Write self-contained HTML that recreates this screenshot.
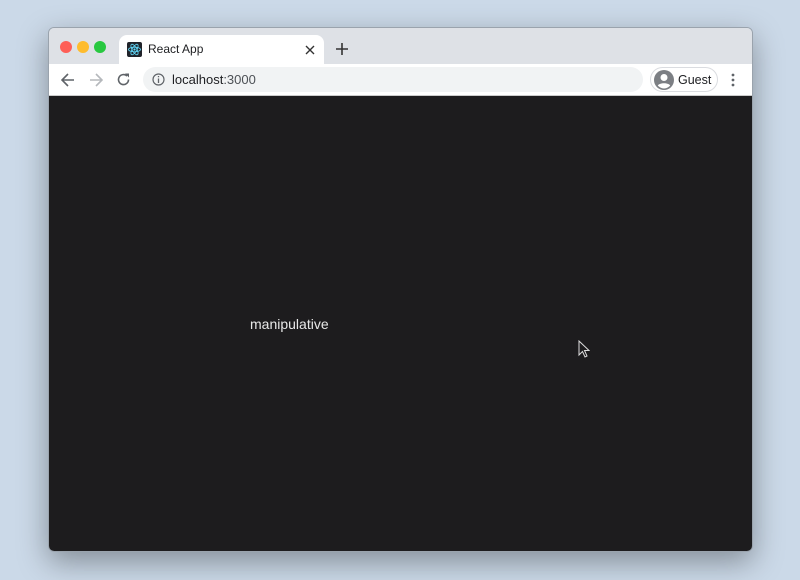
<!DOCTYPE html>
<html><head><meta charset="utf-8"><style>
*{margin:0;padding:0;box-sizing:border-box}
body{width:800px;height:580px;background:#cbd9e8;font-family:"Liberation Sans",sans-serif;position:relative;overflow:hidden}
.win{position:absolute;left:48px;top:27px;width:705px;height:525px;border-radius:6px;overflow:hidden;box-shadow:0 10px 30px rgba(0,0,0,.35);border:1px solid #9aa3ad}
.tabbar{position:absolute;left:0;top:0;width:100%;height:36px;background:#dee1e6}
.dot{position:absolute;top:13px;width:12px;height:12px;border-radius:50%}
.tab{position:absolute;left:70px;top:7px;width:205px;height:30px;background:#fff;border-radius:8px 8px 0 0}
.toolbar{position:absolute;left:0;top:36px;width:100%;height:32px;background:#fff;border-bottom:1px solid #ccc}
.url{position:absolute;left:94px;top:3px;width:500px;height:25px;border-radius:13px;background:#f1f3f4}
.content{position:absolute;left:0;top:68px;width:100%;height:457px;background:#1d1c1e}
.t{position:absolute;font-size:13px;color:#202124}
</style></head><body>
<div class="win">
 <div class="tabbar">
  <div class="dot" style="left:11px;background:#fe5f57"></div>
  <div class="dot" style="left:28px;background:#febc2e"></div>
  <div class="dot" style="left:45px;background:#28c840"></div>
  <div class="tab">
   <div style="position:absolute;left:8px;top:7px;width:15px;height:15px;background:#20232a;border-radius:2px">
    <svg width="15" height="15" viewBox="0 0 15 15"><g fill="none" stroke="#61dafb" stroke-width=".8"><ellipse cx="7.5" cy="7.5" rx="6" ry="2.3"/><ellipse cx="7.5" cy="7.5" rx="6" ry="2.3" transform="rotate(60 7.5 7.5)"/><ellipse cx="7.5" cy="7.5" rx="6" ry="2.3" transform="rotate(120 7.5 7.5)"/></g><circle cx="7.5" cy="7.5" r="1.1" fill="#61dafb"/></svg>
   </div>
   <div class="t" style="left:29px;top:7px;font-size:12px">React App</div>
   <svg style="position:absolute;left:186px;top:10px" width="10" height="10"><path d="M1 1L9 9M9 1L1 9" stroke="#333" stroke-width="1.4"/></svg>
  </div>
  <svg style="position:absolute;left:287px;top:15px" width="12" height="12"><path d="M6 0V12M0 6H12" stroke="#333" stroke-width="1.6"/></svg>
 </div>
 <div class="toolbar">
  <svg style="position:absolute;left:12px;top:9px" width="14" height="14"><path d="M13 7H2M7 1L1 7L7 13" fill="none" stroke="#5f6368" stroke-width="1.6"/></svg>
  <svg style="position:absolute;left:40px;top:9px" width="14" height="14"><path d="M1 7H12M7 1L13 7L7 13" fill="none" stroke="#b5b8bc" stroke-width="1.6"/></svg>
  <svg style="position:absolute;left:67px;top:8px" width="15" height="15" viewBox="0 0 15 15"><path d="M12.5 7.5A5 5 0 1 1 11 4" fill="none" stroke="#5f6368" stroke-width="1.6"/><path d="M9 1.5H13V5.5Z" fill="#5f6368"/></svg>
  <div class="url">
   <svg style="position:absolute;left:9px;top:6px" width="13" height="13"><circle cx="6.5" cy="6.5" r="5.5" fill="none" stroke="#5f6368" stroke-width="1.2"/><path d="M6.5 5.5V10M6.5 3V4.3" stroke="#5f6368" stroke-width="1.3"/></svg>
   <div class="t" style="left:29px;top:5px">localhost<span style="color:#4d5156">:3000</span></div>
  </div>
  <div style="position:absolute;left:601px;top:3px;width:68px;height:25px;border:1px solid #dadce0;border-radius:13px">
   <svg style="position:absolute;left:3px;top:2px" width="20" height="20" viewBox="0 0 20 20"><circle cx="10" cy="10" r="10" fill="#7c7f84"/><circle cx="10" cy="7.5" r="3.5" fill="#fff"/><path d="M3.8 15.5C5.5 12.5 14.5 12.5 16.2 15.5A8 8 0 0 1 3.8 15.5Z" fill="#fff"/></svg>
   <div class="t" style="left:27px;top:5px;font-size:12.5px">Guest</div>
  </div>
  <svg style="position:absolute;left:682px;top:9px" width="4" height="14"><circle cx="2" cy="2" r="1.4" fill="#5f6368"/><circle cx="2" cy="7" r="1.4" fill="#5f6368"/><circle cx="2" cy="12" r="1.4" fill="#5f6368"/></svg>
 </div>
 <div class="content">
  <div style="position:absolute;left:201px;top:220px;color:#e8e8e8;font-size:14px">manipulative</div>
  <svg style="position:absolute;left:529px;top:244px" width="12" height="18" viewBox="0 0 12 18"><path d="M1 1V15L4.5 11.5L7 17L9 16L6.5 10.5H11Z" fill="#1d1c1e" stroke="#ddd" stroke-width="1"/></svg>
 </div>
</div>
</body></html>
